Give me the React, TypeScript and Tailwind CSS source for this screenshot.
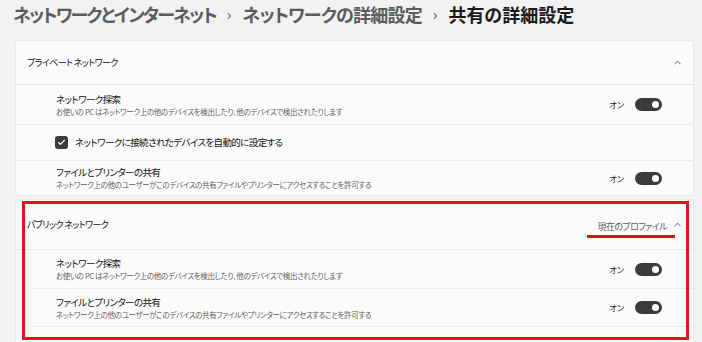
import { ChevronUp, Check } from "lucide-react";

const Toggle = () => (
  <div className="flex items-center gap-[11px]">
    <span className="text-[8.5px] text-[#1f1f1f] tracking-[-0.2px]">オン</span>
    <div className="w-[27px] h-[13px] rounded-full bg-[#3b3b3b] flex items-center justify-end pr-[3px]">
      <div className="w-[7px] h-[7px] rounded-full bg-white" />
    </div>
  </div>
);

interface RowProps {
  title: string;
  desc: string;
  h: string;
  last?: boolean;
  inset?: boolean;
}

const Row = ({ title, desc, h, last, inset }: RowProps) => (
  <div
    className={`flex items-center justify-between pr-[31px] ${h} ${inset ? "ml-[17px] pl-[23px]" : "pl-[40px]"} ${last ? "" : "border-b border-[#ececec]"}`}
  >
    <div className="flex flex-col">
      <span className="text-[9.5px] leading-[14px] tracking-[-0.6px] text-[#111]">{title}</span>
      <span className="text-[7.5px] leading-[12px] tracking-[-0.35px] text-[#5e5e5e]">{desc}</span>
    </div>
    <Toggle />
  </div>
);

const DISCOVERY = "お使いの PC はネットワーク上の他のデバイスを検出したり、他のデバイスで検出されたりします";
const SHARING = "ネットワーク上の他のユーザーがこのデバイスの共有ファイルやプリンターにアクセスすることを許可する";

export default function App() {
  return (
    <div className="relative w-[702px] h-[342px] overflow-hidden bg-[#f2f2f2] font-['Noto_Sans_CJK_JP',sans-serif] [font-feature-settings:'palt']">
      {/* breadcrumb */}
      <div className="h-[28px] flex items-center pl-[13px] gap-[11px] text-[18px] font-semibold">
        <span className="text-[#5c5c5c] tracking-[-1.8px]">ネットワークとインターネット</span>
        <span className="text-[#6a6a6a] text-[14px]">›</span>
        <span className="text-[#5c5c5c] tracking-[-0.8px]">ネットワークの詳細設定</span>
        <span className="text-[#6a6a6a] text-[14px]">›</span>
        <span className="text-[#1a1a1a]">共有の詳細設定</span>
      </div>

      {/* private */}
      <div className="mt-[12px] ml-[15px] w-[679px] bg-[#fbfbfb] border border-[#e9e9e9] rounded-[3px]">
        <div className="h-[44px] flex items-center justify-between pl-[11px] pr-[10px] border-b border-[#e6e6e6]">
          <span className="text-[9px] tracking-[-0.6px] text-[#111]">プライベート ネットワーク</span>
          <ChevronUp className="w-[11px] h-[11px] text-[#555]" strokeWidth={2} />
        </div>
        <Row title="ネットワーク探索" desc={DISCOVERY} h="h-[40px]" />
        <div className="h-[36px] flex items-center pl-[39px] gap-[7px] border-b border-[#ececec]">
          <div className="w-[13px] h-[13px] rounded-[3px] bg-[#3b3b3b] flex items-center justify-center">
            <Check className="w-[9px] h-[9px] text-white" strokeWidth={3} />
          </div>
          <span className="text-[9.5px] tracking-[-0.6px] text-[#111]">ネットワークに接続されたデバイスを自動的に設定する</span>
        </div>
        <Row title="ファイルとプリンターの共有" desc={SHARING} h="h-[34px]" last />
      </div>

      {/* public */}
      <div className="mt-[3px] ml-[15px] w-[679px] bg-[#fbfbfb] border border-[#e9e9e9] rounded-[3px]">
        <div className="h-[50px] flex items-center justify-between pl-[11px] pr-[10px] border-b border-[#ececec]">
          <span className="text-[9px] tracking-[-0.6px] text-[#111]">パブリック ネットワーク</span>
          <div className="flex items-center gap-[6px]">
            <span className="text-[9px] tracking-[-0.6px] text-[#5c5c5c] border-b-[3px] border-[#e3101a] pl-[11px] pr-[8px] leading-[12px] pt-[3px] pb-[2px] -mr-[9px] mt-[6px]">
              現在のプロファイル
            </span>
            <ChevronUp className="w-[11px] h-[11px] text-[#555]" strokeWidth={2} />
          </div>
        </div>
        <Row title="ネットワーク探索" desc={DISCOVERY} h="h-[39px]" inset />
        <Row title="ファイルとプリンターの共有" desc={SHARING} h="h-[38px]" inset />
        <div className="h-[20px]" />
      </div>

      {/* highlight annotation */}
      <div className="absolute left-[22px] top-[201px] w-[667px] h-[139px] border-[3px] border-[#e8101a] pointer-events-none" />
    </div>
  );
}
